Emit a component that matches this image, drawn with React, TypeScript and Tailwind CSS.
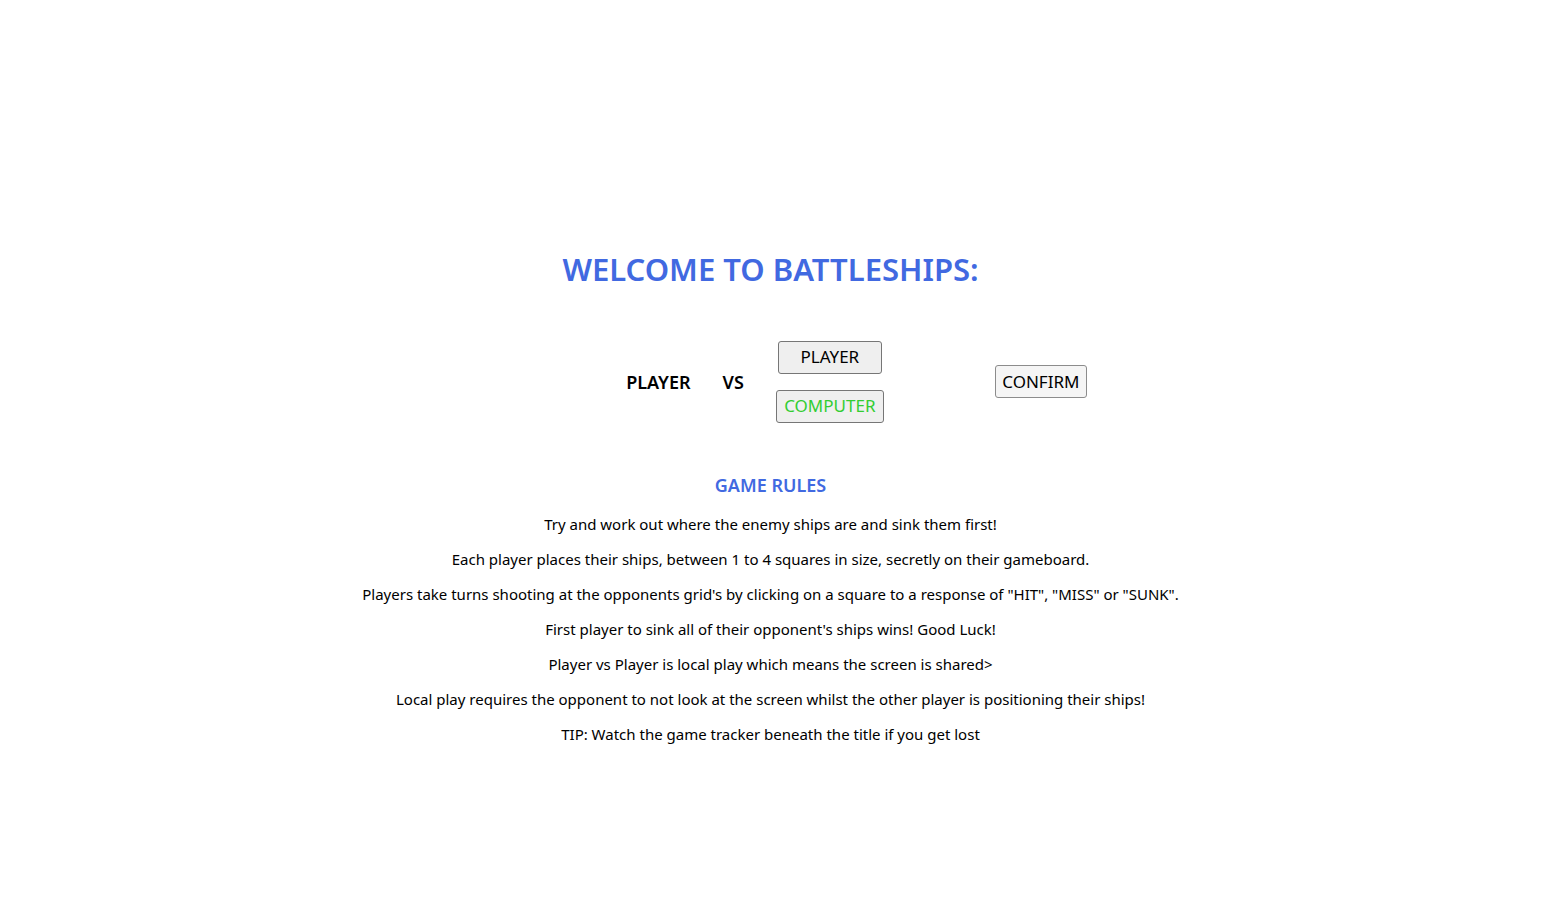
const rules = [
  "Try and work out where the enemy ships are and sink them first!",
  "Each player places their ships, between 1 to 4 squares in size, secretly on their gameboard.",
  "Players take turns shooting at the opponents grid's by clicking on a square to a response of \"HIT\", \"MISS\" or \"SUNK\".",
  "First player to sink all of their opponent's ships wins! Good Luck!",
  "Player vs Player is local play which means the screen is shared>",
  "Local play requires the opponent to not look at the screen whilst the other player is positioning their ships!",
  "TIP: Watch the game tracker beneath the title if you get lost",
];

const button = "h-[33px] rounded-[3px] border pt-px text-[17px] font-normal";

export default function App() {
  return (
    <main className="flex min-h-screen flex-col items-center justify-center bg-white pt-[75px] font-['Trebuchet_MS','Noto_Sans',sans-serif] text-black">
      <h1 className="text-[31px] leading-[37px] font-semibold text-[#4169e1]">WELCOME TO BATTLESHIPS:</h1>
      <div className="mt-[53px] flex items-center pl-[172px]">
        <div className="flex items-center gap-8 text-lg font-semibold">
          <span>PLAYER</span>
          <span>VS</span>
          <div className="flex flex-col items-center gap-4">
            <button type="button" className={`${button} w-[104px] border-[#767676] bg-[#efefef]`}>PLAYER</button>
            <button type="button" className={`${button} w-[108px] border-[#767676] bg-[#efefef] text-[#32cd32]`}>COMPUTER</button>
          </div>
        </div>
        <button type="button" className={`${button} ml-[111px] w-[92px] border-[#8c8c8c] bg-[#f5f5f5]`}>CONFIRM</button>
      </div>
      <h2 className="mt-[52px] text-lg leading-[21px] font-semibold text-[#4169e1]">GAME RULES</h2>
      <div className="mt-[19px] flex flex-col gap-4 text-center text-[15px] leading-[19px]">
        {rules.map((rule) => (
          <p key={rule}>{rule}</p>
        ))}
      </div>
    </main>
  );
}
